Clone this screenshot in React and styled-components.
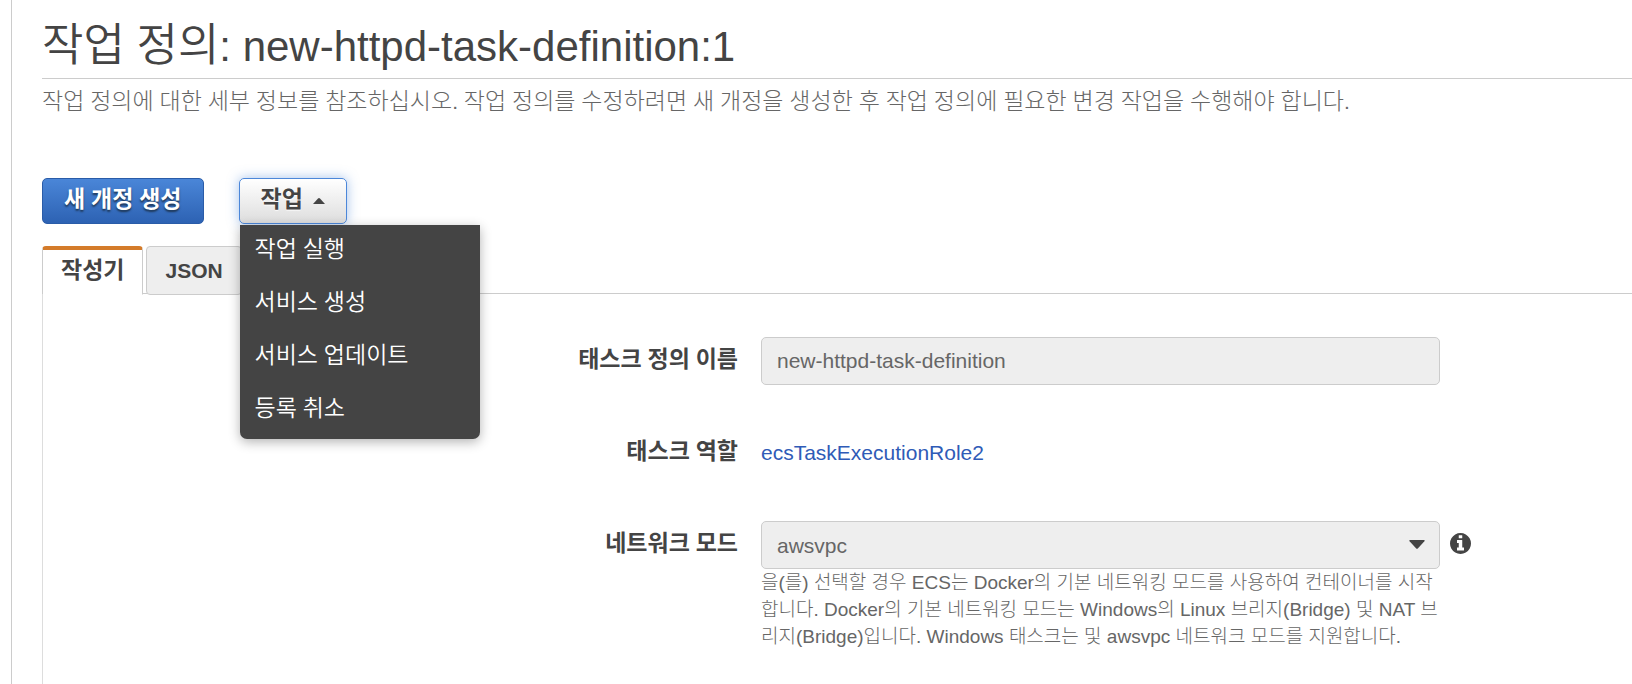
import React from 'react'
import styled, { createGlobalStyle } from 'styled-components'

const GlobalStyle = createGlobalStyle`
  * {
    box-sizing: border-box;
  }
  body {
    margin: 0;
    background: #ffffff;
    color: #444444;
    font-family: 'Liberation Sans', 'Noto Sans CJK KR', sans-serif;
    font-size: 21px;
    overflow-x: hidden;
  }
  button,
  input,
  select {
    font-family: inherit;
  }
`

const Page = styled.main`
  min-height: 100vh;
  margin-left: 11px;
  padding-left: 30px;
  border-left: 1px solid #cccccc;
  display: flex;
  flex-direction: column;
`

const Title = styled.h1`
  margin: 0;
  height: 79px;
  padding-top: 17px;
  border-bottom: 1px solid #cccccc;
  font-size: 42px;
  font-weight: 350;
  line-height: 60px;
  white-space: nowrap;
`

const Word = styled.span`
  font-size: ${(props) => props.$size}px;
  line-height: 1;
`

const Description = styled.p`
  margin: 0;
  padding-top: 9px;
  color: #666666;
  font-size: 21px;
  font-weight: 300;
  line-height: 28px;
`

const Toolbar = styled.div`
  display: flex;
  gap: 35px;
  margin-top: 62px;
`

const Button = styled.button`
  height: 46px;
  padding: 0 21px 3px;
  border: 1px solid ${(props) => (props.$primary ? '#2a5ca8' : '#4c87d9')};
  border-radius: 5px;
  font-size: 21px;
  font-weight: 700;
  line-height: 28px;
  white-space: nowrap;
  color: ${(props) => (props.$primary ? '#ffffff' : '#444444')};
  background: ${(props) =>
    props.$primary
      ? 'linear-gradient(#4a86d8, #2d62b3)'
      : 'linear-gradient(#ffffff, #dddddd)'};
  text-shadow: ${(props) =>
    props.$primary ? '0 2px 2px #1d3552' : '0 1px 1px #ffffff'};
  box-shadow: ${(props) =>
    props.$primary ? 'none' : '0 0 12px rgba(76, 135, 217, 0.5)'};
  svg {
    margin-left: 10px;
    vertical-align: 3px;
  }
`

const Dropdown = styled.div`
  position: relative;
`

const Menu = styled.ul`
  position: absolute;
  top: 47px;
  left: 1px;
  z-index: 1;
  width: 240px;
  margin: 0;
  padding: 0 0 2px;
  list-style: none;
  background: #444444;
  border-radius: 0 0 7px 7px;
  box-shadow: 0 3px 12px rgba(0, 0, 0, 0.3);
`

const MenuItem = styled.a`
  display: block;
  height: 53px;
  padding: 11px 15px;
  color: #ffffff;
  font-size: 21px;
  font-weight: 350;
  line-height: 28px;
  text-decoration: none;
`

const Tabs = styled.div`
  display: flex;
  align-items: flex-start;
  gap: 3px;
  height: 48px;
  margin-top: 22px;
  border-bottom: 1px solid #cccccc;
`

const Tab = styled.button`
  height: 49px;
  padding: ${(props) => (props.$active ? '0 18px 3px' : '0 18px')};
  border: 1px solid #cccccc;
  border-top: ${(props) =>
    props.$active ? '4px solid #d47b2a' : '1px solid #cccccc'};
  border-bottom-color: ${(props) => (props.$active ? '#ffffff' : '#cccccc')};
  border-radius: ${(props) => (props.$active ? '4px 4px 0 0' : '4px')};
  background: ${(props) => (props.$active ? '#ffffff' : '#eeeeee')};
  color: #444444;
  font-size: 21px;
  font-weight: 700;
  line-height: 28px;
`

const Panel = styled.form`
  flex: 1;
  display: flex;
  flex-direction: column;
  gap: 44px;
  padding: 43px 0;
  border-left: 1px solid #dddddd;
`

const Row = styled.div`
  display: grid;
  grid-template-columns: 718fr 679fr 192fr;
  align-items: start;
`

const Label = styled.label`
  height: 48px;
  padding: 9px 23px 11px 0;
  font-size: 21px;
  font-weight: 700;
  line-height: 28px;
  text-align: right;
`

const control = `
  display: block;
  width: 100%;
  height: 48px;
  padding: 0 15px;
  border: 1px solid #cccccc;
  border-radius: 5px;
  background: #eeeeee;
  color: #666666;
  font-size: 21px;
`

const Input = styled.input`
  ${control}
`

const Select = styled.select`
  ${control}
  appearance: none;
`

const SelectBox = styled.div`
  position: relative;
  svg {
    position: absolute;
    top: 19px;
    right: 15px;
    pointer-events: none;
  }
`

const RoleLink = styled.a`
  color: #2f5bb7;
  font-size: 21px;
  line-height: 48px;
  text-decoration: none;
`

const Help = styled.p`
  margin: 0;
  color: #666666;
  font-size: 19px;
  font-weight: 300;
  line-height: 27px;
  word-break: break-all;
`

const Info = styled.span`
  display: flex;
  padding: 12px 0 0 10px;
`

const ACTIONS = ['작업 실행', '서비스 생성', '서비스 업데이트', '등록 취소']

// Hangul words are set a little larger than the Latin text round them
const Hangul = ({ children, size = 23 }) =>
  children.split(/([가-힣]+)/).map((part, index) =>
    index % 2 ? (
      <Word key={index} $size={size}>
        {part}
      </Word>
    ) : (
      part
    )
  )

const CaretUp = () => (
  <svg width="12" height="6" viewBox="0 0 12 6" fill="#444444">
    <path d="M0 6 L5 0.6 Q6 -0.4 7 0.6 L12 6 Z" />
  </svg>
)

const CaretDown = () => (
  <svg width="16" height="9" viewBox="0 0 16 9" fill="#444444">
    <path d="M1 0 H15 Q16.2 0.2 15.4 1.2 L8.8 8.4 Q8 9.2 7.2 8.4 L0.6 1.2 Q-0.2 0.2 1 0 Z" />
  </svg>
)

const InfoCircle = () => (
  <svg width="21" height="21" viewBox="128 128 1536 1536" fill="#444444">
    <path d="M1152 1376v-160q0-14-9-23t-23-9h-96v-512q0-14-9-23t-23-9h-320q-14 0-23 9t-9 23v160q0 14 9 23t23 9h96v320h-96q-14 0-23 9t-9 23v160q0 14 9 23t23 9h448q14 0 23-9t9-23zm-128-896v-160q0-14-9-23t-23-9h-192q-14 0-23 9t-9 23v160q0 14 9 23t23 9h192q14 0 23-9t9-23zm640 416q0 209-103 385.5t-279.5 279.5-385.5 103-385.5-103-279.5-279.5-103-385.5 103-385.5 279.5-279.5 385.5-103 385.5 103 279.5 279.5 103 385.5z" />
  </svg>
)

const App = () => {
  return (
    <>
      <GlobalStyle />
      <Page>
        <Title>
          <Hangul size={45}>작업 정의: new-httpd-task-definition:1</Hangul>
        </Title>
        <Description>
          <Hangul>
            작업 정의에 대한 세부 정보를 참조하십시오. 작업 정의를 수정하려면 새
            개정을 생성한 후 작업 정의에 필요한 변경 작업을 수행해야 합니다.
          </Hangul>
        </Description>
        <Toolbar>
          <Button type="button" $primary>
            <Hangul>새 개정 생성</Hangul>
          </Button>
          <Dropdown>
            <Button type="button" aria-expanded="true">
              <Hangul>작업</Hangul>
              <CaretUp />
            </Button>
            <Menu>
              {ACTIONS.map((action) => (
                <li key={action}>
                  <MenuItem href="#">
                    <Hangul>{action}</Hangul>
                  </MenuItem>
                </li>
              ))}
            </Menu>
          </Dropdown>
        </Toolbar>
        <Tabs role="tablist">
          <Tab type="button" role="tab" aria-selected="true" $active>
            <Hangul>작성기</Hangul>
          </Tab>
          <Tab type="button" role="tab" aria-selected="false">
            JSON
          </Tab>
        </Tabs>
        <Panel>
          <Row>
            <Label htmlFor="name">
              <Hangul>태스크 정의 이름</Hangul>
            </Label>
            <Input id="name" readOnly value="new-httpd-task-definition" />
          </Row>
          <Row>
            <Label as="span" id="role">
              <Hangul>태스크 역할</Hangul>
            </Label>
            <RoleLink href="#" aria-describedby="role">
              ecsTaskExecutionRole2
            </RoleLink>
          </Row>
          <Row>
            <Label htmlFor="network">
              <Hangul>네트워크 모드</Hangul>
            </Label>
            <div>
              <SelectBox>
                <Select id="network" defaultValue="awsvpc">
                  <option value="awsvpc">awsvpc</option>
                </Select>
                <CaretDown />
              </SelectBox>
              <Help>
                을(를) 선택할 경우 ECS는 Docker의 기본 네트워킹 모드를 사용하여
                컨테이너를 시작합니다. Docker의 기본 네트워킹 모드는 Windows의
                Linux 브리지(Bridge) 및 NAT 브리지(Bridge)입니다. Windows
                태스크는 및 awsvpc 네트워크 모드를 지원합니다.
              </Help>
            </div>
            <Info>
              <InfoCircle />
            </Info>
          </Row>
        </Panel>
      </Page>
    </>
  )
}

export default App
